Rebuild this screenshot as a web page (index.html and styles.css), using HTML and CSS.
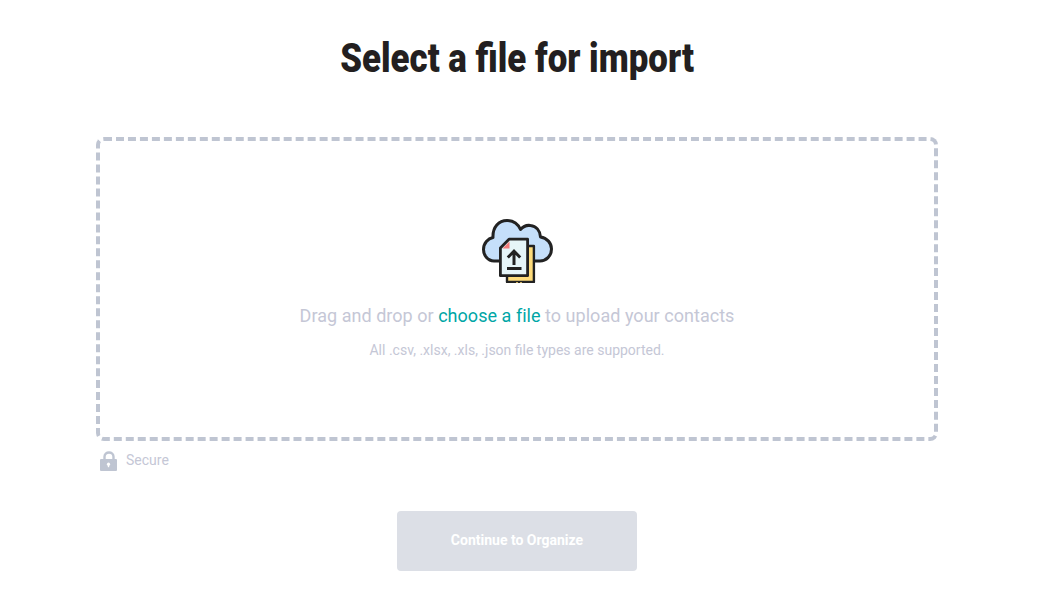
FILE: index.html
```html
<!DOCTYPE html>
<html lang="en">
<head>
    <meta charset="UTF-8">
    <meta name="viewport" content="width=device-width, initial-scale=1.0">
    <title>Select a file for import</title>
    <link rel="stylesheet" href="styles.css">
</head>
<body>
    <div class="pagina">
        <h1 class="titulo"><span>Select a file for import</span></h1>
        <div class="zona">
            <svg class="icono-nube" width="76" height="68" viewBox="-1 0 76 68">
                <path d="M14 44C7.5 44 3.5 38 3.5 32.5C3.5 26 8 21.5 13 20.5C12.5 10 19 3.5 27 3.5C33 3.5 38 7 40.5 12.5C43 9.5 47 8 50.5 8.5C56 9 60 13.5 60.5 20C67 21 71.5 26 71.5 32C71.5 39 66 44 60 44Z" fill="#c5dffa" stroke="#222" stroke-width="3" stroke-linejoin="round"/>
                <path d="M27 29H53.9V64.9H27Z" fill="#fedb7a" stroke="#222" stroke-width="2.4" stroke-linejoin="round"/>
                <path d="M37 64.9V66M41 64.9V66" stroke="#fedb7a" stroke-width="1.5"/>
                <path d="M29 22.2H47.6V58.7H20.4V31Z" fill="#e6f5f8" stroke="#222" stroke-width="2.8" stroke-linejoin="round"/>
                <path d="M29.5 24.5V31.5H22.5Z" fill="#f47c7c"/>
                <path d="M34 48V34.5M27.8 40.5L34 34.2L40.2 40.5M27 51.5H41.5" fill="none" stroke="#222" stroke-width="3"/>
            </svg>
            <p class="zona-texto">Drag and drop or <a href="#" class="enlace">choose a file</a> to upload your contacts</p>
            <p class="zona-nota">All .csv, .xlsx, .xls, .json file types are supported.</p>
        </div>
        <div class="seguro">
            <svg width="18" height="20" viewBox="0 0 18 20">
                <path d="M4.5 9V5.8C4.5 3.2 6.5 1.5 9 1.5S13.5 3.2 13.5 5.8V9" fill="none" stroke="#bfc5d2" stroke-width="2.4"/>
                <path d="M1 8H16Q17 8 17 9V19Q17 20 16 20H1Q0 20 0 19V9Q0 8 1 8Z" fill="#bfc5d2"/>
                <circle cx="8.5" cy="13.2" r="1.6" fill="#fff"/>
                <path d="M7.8 13.5H9.2V16.2H7.8Z" fill="#fff"/>
            </svg>
            <span class="seguro-texto">Secure</span>
        </div>
        <button class="boton">Continue to Organize</button>
    </div>
</body>
</html>
```

FILE: styles.css
```css
body {
    font-family: Roboto, "Liberation Sans", sans-serif;
    margin: 0;
    background: #fff;
}
.pagina {
    width: 842px;
    margin-left: 96px;
    display: flex;
    flex-direction: column;
    align-items: center;
}
.titulo {
    width: 100%;
    height: 137px;
    margin: 0;
    padding-top: 34px;
    box-sizing: border-box;
    text-align: center;
    font-size: 41px;
    line-height: 48px;
    font-weight: 900;
    color: #231f20;
}
.titulo span {
    display: inline-block;
    transform: scaleX(0.85);
    white-space: nowrap;
}
.zona {
    width: 100%;
    height: 304px;
    box-sizing: border-box;
    border: 4px dashed #bfc5d2;
    border-radius: 8px;
    padding-top: 76px;
    display: flex;
    flex-direction: column;
    align-items: center;
}
.zona-texto {
    margin: 17px 0 0;
    font-size: 18px;
    line-height: 27px;
    letter-spacing: 0.033px;
    color: #c5c7d6;
}
.enlace {
    color: #00a6a6;
    text-decoration: none;
}
.zona-nota {
    margin: 11px 0 0;
    font-size: 14px;
    line-height: 21px;
    color: #c5c7d6;
}
.seguro {
    align-self: flex-start;
    display: flex;
    align-items: center;
    gap: 8px;
    margin: 10px 0 0 4px;
    height: 20px;
    font-size: 14px;
    color: #c5c7d6;
}
.seguro-texto {
    padding-bottom: 3px;
}
.boton {
    width: 240px;
    height: 60px;
    margin-top: 40px;
    padding-bottom: 4px;
    border: 0;
    border-radius: 4px;
    background: #dcdfe6;
    color: #fff;
    font-family: Roboto, "Liberation Sans", sans-serif;
    font-size: 14px;
    font-weight: 700;
}
```
